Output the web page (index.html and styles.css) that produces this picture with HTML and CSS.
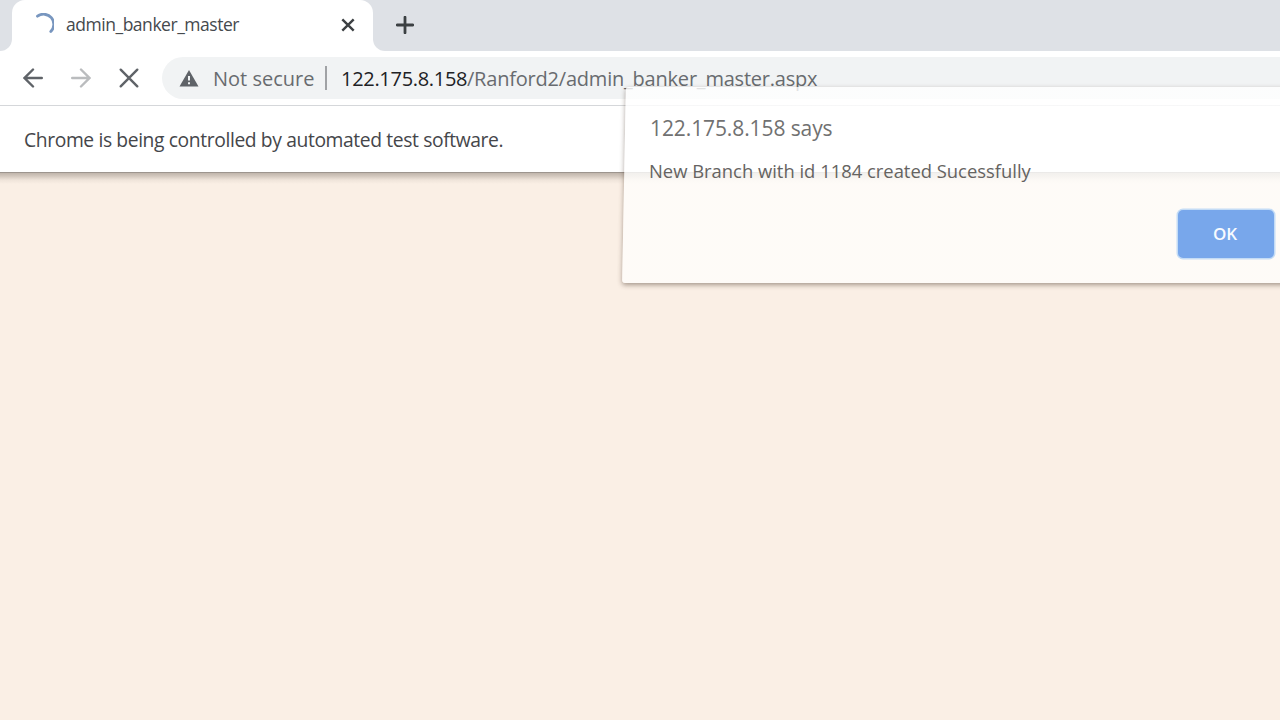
FILE: index.html
```html
<!DOCTYPE html>
<html lang="en">
<head>
<meta charset="utf-8">
<title>admin_banker_master</title>
<link rel="stylesheet" href="styles.css">
</head>
<body>
<div class="browser">
  <header class="tabs">
    <div class="edge edge-left"></div>
    <div class="tab">
      <svg class="spinner" width="24" height="24" viewBox="0 0 24 24"><path d="M7.5 3.2A10.2 10.2 0 0 1 20.8 18.6"/></svg>
      <span class="tab-title">admin_banker_master</span>
      <svg class="tab-close" width="14" height="14" viewBox="0 0 14 14"><path d="M1.3 1.3 12.7 12.7M12.7 1.3 1.3 12.7"/></svg>
    </div>
    <div class="edge edge-right">
      <svg width="18" height="18" viewBox="0 0 18 18"><path d="M9 1.2V16.8M1.2 9H16.8"/></svg>
    </div>
  </header>
  <nav class="toolbar">
    <svg class="nav" width="20" height="20" viewBox="0 0 20 20"><path d="M18.8 10H2M10 1.5 1.5 10l8.5 8.5"/></svg>
    <svg class="nav forward" width="20" height="20" viewBox="0 0 20 20"><path d="M1.2 10H18M10 1.5 18.5 10 10 18.5"/></svg>
    <svg class="nav" width="20" height="20" viewBox="0 0 20 20"><path d="M1.7 1.7 18.3 18.3M18.3 1.7 1.7 18.3"/></svg>
    <div class="address">
      <svg class="warning" width="20" height="17" viewBox="0 0 20 17"><path class="sign" d="M10 0 19.5 16.6H.5Z"/><path class="mark" d="M10 6v4.6M10 12.2v2"/></svg>
      <span class="not-secure">Not secure</span>
      <i class="divider"></i>
      <span class="host">122.175.8.158</span><span class="path">/Ranford2/admin_banker_master.aspx</span>
    </div>
  </nav>
  <div class="infobar"><span class="notice">Chrome is being controlled by automated test software.</span></div>
  <main class="page"></main>
  <section class="dialog">
    <h1 class="dialog-title">122.175.8.158 says</h1>
    <p class="message">New Branch with id 1184 created Sucessfully</p>
    <button class="ok">OK</button>
  </section>
</div>
</body>
</html>
```

FILE: styles.css
```css
* { box-sizing: border-box; }
body { margin: 0; font-family: "Open Sans", "Noto Sans", sans-serif; }
svg { display: block; flex: none; fill: none; }
.browser { position: relative; width: 1280px; height: 720px; overflow: hidden; display: flex; flex-direction: column; background: #fff; white-space: nowrap; }
.tabs { height: 51px; display: flex; flex: none; background: linear-gradient(#dee1e6 0 25px, #fff 25px); }
.edge { background: #dee1e6; }
.edge-left { width: 12px; border-bottom-right-radius: 12px; }
.edge-right { flex: 1; border-bottom-left-radius: 12px; padding: 16px 0 0 23px; }
.edge-right svg { stroke: #3c4043; stroke-width: 2.8; stroke-linecap: round; }
.tab { width: 361px; display: flex; padding: 0 18px 1px; align-items: center; background: #fff; border-radius: 13px 13px 0 0; }
.spinner { stroke: #7896bf; stroke-width: 2.8; stroke-linecap: round; }
.tab-title { margin-left: 12px; font-size: 17.5px; letter-spacing: -0.47px; color: #45494d; line-height: 48px; padding-bottom: 2px; }
.tab-close { margin-left: auto; stroke: #3c4043; stroke-width: 2.4; }
.toolbar { height: 55px; flex: none; display: flex; align-items: center; padding: 0 0 1px 23px; gap: 28px; border-bottom: 1px solid #d5d7da; }
.nav { stroke: #5f6368; stroke-width: 2.4; stroke-linecap: round; }
.forward { stroke: #babcbe; }
.address { flex: 1; height: 42px; margin-left: -5px; margin-top: 1px; display: flex; align-items: center; padding-left: 17px; border-radius: 21px 0 0 21px; background: #f1f3f4; color: #686b6f; font-size: 20px; }
.sign { fill: #5f6368; }
.mark { stroke: #f1f3f4; stroke-width: 2; }
.not-secure { width: 101px; margin-left: 14px; }
.divider { width: 2px; height: 24px; margin: 0 14px 0 11px; background: #a0a2a5; }
.host { width: 126px; color: #202124; letter-spacing: -0.3px; }
.path { letter-spacing: -0.21px; }
.infobar { height: 66px; flex: none; display: flex; align-items: center; padding: 1px 0 0 24px; font-size: 19.3px; letter-spacing: -0.39px; color: #45464a; }
.page { flex: 1; background: linear-gradient(#9d958e 0 1px, #c0b5ab 1px, #d2c7bd 4px, #efe4da 8px, #faefe5 12px); }
.dialog { position: absolute; left: 624px; top: 87px; width: 680px; height: 196px; padding: 23px 0 0 26px; color: #717171; }
.dialog::before { content: ""; position: absolute; z-index: 0; inset: 0; transform: skewX(-1.1deg); background: linear-gradient(rgba(255,255,255,.8) 0 85px, rgba(255,254,252,.8) 90px); border-radius: 3px; box-shadow: 0 2px 5px rgba(65,45,30,.45); }
.dialog-title, .message, .ok { position: relative; }
.dialog-title { margin: 0; font-size: 21px; letter-spacing: -0.1px; line-height: 36px; font-weight: 400; }
.message { margin: 9px 0 0 -1px; font-size: 18.4px; line-height: 32px; color: #656361; }
.ok { display: block; width: 96px; height: 48px; margin: 23px 0 0 528px; padding: 0 2px 1px 0; border: 0; border-radius: 5px; background: #78a7eb; color: #f7fbff; box-shadow: 0 0 0 1.5px #c4dcf6; font: 600 17px "Open Sans", sans-serif; }
```
